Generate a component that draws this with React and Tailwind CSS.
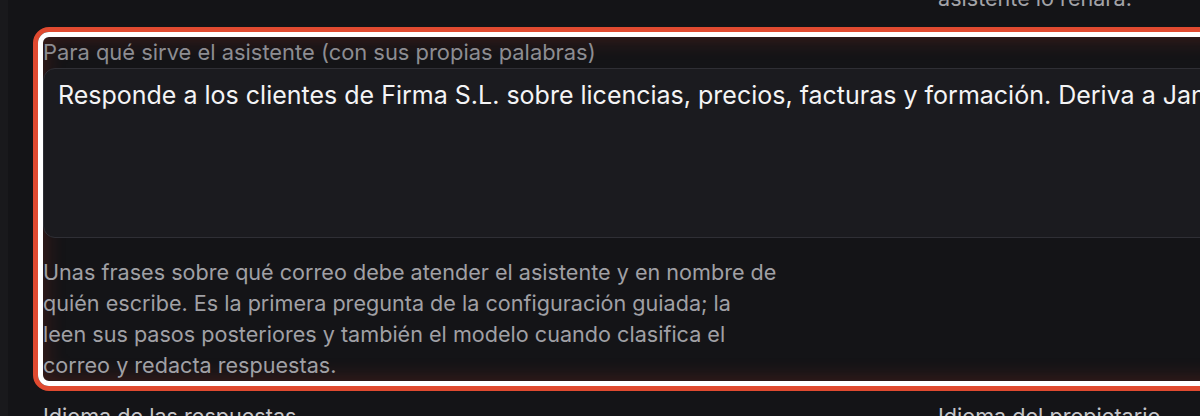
import React from 'react'

const font = { fontFamily: 'Inter, "Noto Sans", sans-serif' }

const App = () => {
  return (
    <div className="h-[416px] w-[1200px] overflow-hidden bg-[#141417] flex" style={font}>
      <div className="w-2 bg-[#19191c] shrink-0" />
      <div className="pl-[35px] shrink-0">
        <div className="grid grid-cols-[880px_880px] gap-x-[15px]">
          <div />
          <p className="-mt-[17px] text-[21.6px] leading-[31px] text-[#a3a3a8]">asistente lo rehará.</p>

          <div className="col-span-2 mt-[13px] -ml-[10px] rounded-[16px] border-[5px] border-[#e04a30]">
            <div className="rounded-[11px] border-[5px] border-white shadow-[inset_0_0_22px_rgba(200,60,35,0.28)]">
              <label className="block pt-[2px] text-[21.9px] leading-[26px] text-[#8d8d92]">
                Para qué sirve el asistente (con sus propias palabras)
              </label>
              <div className="mt-[3px] h-[170px] rounded-[12px] border border-[#2f2f35] bg-[#1b1b1f] pl-[14px] pt-[11px]">
                <p className="whitespace-nowrap text-[25px] leading-[30px] text-[#f4f4f5]">
                  Responde a los clientes de Firma S.L. sobre licencias, precios, facturas y formación. Deriva a Jana los casos de soporte técnico y a Pablo las reclamaciones.
                </p>
              </div>
              <p className="mt-[19px] max-w-[760px] text-[21.6px] leading-[31px] text-[#a0a0a5]">
                Unas frases sobre qué correo debe atender el asistente y en nombre de<br />
                quién escribe. Es la primera pregunta de la configuración guiada; la<br />
                leen sus pasos posteriores y también el modelo cuando clasifica el<br />
                correo y redacta respuestas.
              </p>
            </div>
          </div>

          <p className="mt-[10px] text-[21.6px] leading-[31px] text-[#c4c4c8]">Idioma de las respuestas</p>
          <p className="mt-[10px] text-[21.6px] leading-[31px] text-[#c4c4c8]">Idioma del propietario</p>
        </div>
      </div>
    </div>
  )
}

export default App
